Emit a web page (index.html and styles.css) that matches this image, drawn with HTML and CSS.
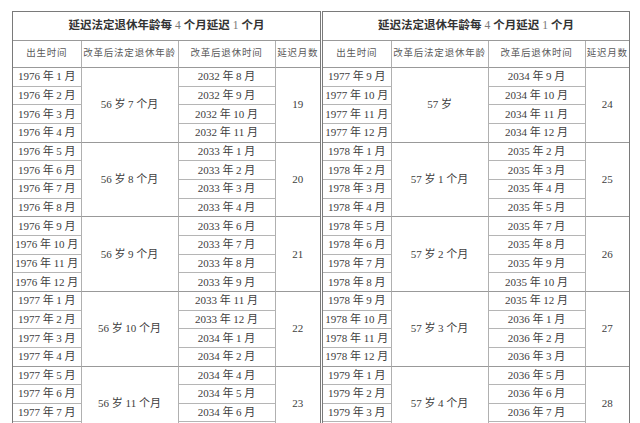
FILE: index.html
```html
<!DOCTYPE html>
<html lang="zh">
<head>
<meta charset="utf-8">
<link rel="stylesheet" href="styles.css">
</head>
<body>
<div class="page">
<div class="tbl tbl-left">
  <div class="cell title">延迟法定退休年龄每 <span class="num">4</span> 个月延迟 <span class="num">1</span> 个月</div>
  <div class="cell head">出生时间</div><div class="cell head">改革后法定退休年龄</div><div class="cell head">改革后退休时间</div><div class="cell head last">延迟月数</div>

  <div class="cell">1976 年 1 月</div><div class="cell merge">56 岁 7 个月</div><div class="cell">2032 年 8 月</div><div class="cell merge last">19</div>
  <div class="cell">1976 年 2 月</div><div class="cell">2032 年 9 月</div>
  <div class="cell">1976 年 3 月</div><div class="cell">2032 年 10 月</div>
  <div class="cell ge">1976 年 4 月</div><div class="cell ge">2032 年 11 月</div>

  <div class="cell">1976 年 5 月</div><div class="cell merge">56 岁 8 个月</div><div class="cell">2033 年 1 月</div><div class="cell merge last">20</div>
  <div class="cell">1976 年 6 月</div><div class="cell">2033 年 2 月</div>
  <div class="cell">1976 年 7 月</div><div class="cell">2033 年 3 月</div>
  <div class="cell ge">1976 年 8 月</div><div class="cell ge">2033 年 4 月</div>

  <div class="cell">1976 年 9 月</div><div class="cell merge">56 岁 9 个月</div><div class="cell">2033 年 6 月</div><div class="cell merge last">21</div>
  <div class="cell">1976 年 10 月</div><div class="cell">2033 年 7 月</div>
  <div class="cell">1976 年 11 月</div><div class="cell">2033 年 8 月</div>
  <div class="cell ge">1976 年 12 月</div><div class="cell ge">2033 年 9 月</div>

  <div class="cell">1977 年 1 月</div><div class="cell merge">56 岁 10 个月</div><div class="cell">2033 年 11 月</div><div class="cell merge last">22</div>
  <div class="cell">1977 年 2 月</div><div class="cell">2033 年 12 月</div>
  <div class="cell">1977 年 3 月</div><div class="cell">2034 年 1 月</div>
  <div class="cell ge">1977 年 4 月</div><div class="cell ge">2034 年 2 月</div>

  <div class="cell">1977 年 5 月</div><div class="cell merge">56 岁 11 个月</div><div class="cell">2034 年 4 月</div><div class="cell merge last">23</div>
  <div class="cell">1977 年 6 月</div><div class="cell">2034 年 5 月</div>
  <div class="cell">1977 年 7 月</div><div class="cell">2034 年 6 月</div>
  <div class="cell ge">1977 年 8 月</div><div class="cell ge">2034 年 7 月</div>
</div>
<div class="tbl tbl-right">
  <div class="cell title">延迟法定退休年龄每 <span class="num">4</span> 个月延迟 <span class="num">1</span> 个月</div>
  <div class="cell head">出生时间</div><div class="cell head">改革后法定退休年龄</div><div class="cell head">改革后退休时间</div><div class="cell head last">延迟月数</div>

  <div class="cell">1977 年 9 月</div><div class="cell merge">57 岁</div><div class="cell">2034 年 9 月</div><div class="cell merge last">24</div>
  <div class="cell">1977 年 10 月</div><div class="cell">2034 年 10 月</div>
  <div class="cell">1977 年 11 月</div><div class="cell">2034 年 11 月</div>
  <div class="cell ge">1977 年 12 月</div><div class="cell ge">2034 年 12 月</div>

  <div class="cell">1978 年 1 月</div><div class="cell merge">57 岁 1 个月</div><div class="cell">2035 年 2 月</div><div class="cell merge last">25</div>
  <div class="cell">1978 年 2 月</div><div class="cell">2035 年 3 月</div>
  <div class="cell">1978 年 3 月</div><div class="cell">2035 年 4 月</div>
  <div class="cell ge">1978 年 4 月</div><div class="cell ge">2035 年 5 月</div>

  <div class="cell">1978 年 5 月</div><div class="cell merge">57 岁 2 个月</div><div class="cell">2035 年 7 月</div><div class="cell merge last">26</div>
  <div class="cell">1978 年 6 月</div><div class="cell">2035 年 8 月</div>
  <div class="cell">1978 年 7 月</div><div class="cell">2035 年 9 月</div>
  <div class="cell ge">1978 年 8 月</div><div class="cell ge">2035 年 10 月</div>

  <div class="cell">1978 年 9 月</div><div class="cell merge">57 岁 3 个月</div><div class="cell">2035 年 12 月</div><div class="cell merge last">27</div>
  <div class="cell">1978 年 10 月</div><div class="cell">2036 年 1 月</div>
  <div class="cell">1978 年 11 月</div><div class="cell">2036 年 2 月</div>
  <div class="cell ge">1978 年 12 月</div><div class="cell ge">2036 年 3 月</div>

  <div class="cell">1979 年 1 月</div><div class="cell merge">57 岁 4 个月</div><div class="cell">2036 年 5 月</div><div class="cell merge last">28</div>
  <div class="cell">1979 年 2 月</div><div class="cell">2036 年 6 月</div>
  <div class="cell">1979 年 3 月</div><div class="cell">2036 年 7 月</div>
  <div class="cell ge">1979 年 4 月</div><div class="cell ge">2036 年 8 月</div>
</div>
</div>
</body>
</html>
```

FILE: styles.css
```css
html, body {
  margin: 0;
  padding: 0;
  background: #ffffff;
}

body {
  font-family: "Liberation Serif", "Noto Sans CJK SC", serif;
  color: #404040;
  overflow: hidden;
  height: 423px;
}

.page {
  display: flex;
  align-items: flex-start;
  gap: 1px;
  padding: 11px 0 0 12px;
}

.tbl {
  box-sizing: border-box;
  display: grid;
  grid-template-rows: 28.5px 27.5px repeat(20, 18.67px);
  border: 1.5px solid #7a7a7a;
  border-bottom: none;
}

.tbl-left {
  width: 309px;
  grid-template-columns: 68.5px 97px 97px 1fr;
}

.tbl-right {
  width: 308px;
  grid-template-columns: 68.5px 97px 97px 1fr;
}

.cell {
  box-sizing: border-box;
  display: flex;
  align-items: center;
  justify-content: center;
  white-space: nowrap;
  overflow: hidden;
  font-size: 11px;
  line-height: 11px;
  border-right: 1px solid #b0b0b0;
  border-bottom: 1px solid #b5b5b5;
}

.cell.last {
  border-right: none;
}

.title {
  grid-column: 1 / -1;
  font-size: 11.5px;
  font-weight: bold;
  color: #333;
  border-right: none;
  border-bottom: 1px solid #999;
}

.title .num {
  font-weight: normal;
  color: #777;
  margin: 0 3px;
}

.head {
  font-size: 9.5px;
  letter-spacing: 0.8px;
  color: #5a5a5a;
  border-bottom: 1px solid #999;
}

.merge {
  grid-row: span 4;
  border-bottom: 1px solid #999;
}

.ge {
  border-bottom: 1px solid #999;
}
```
